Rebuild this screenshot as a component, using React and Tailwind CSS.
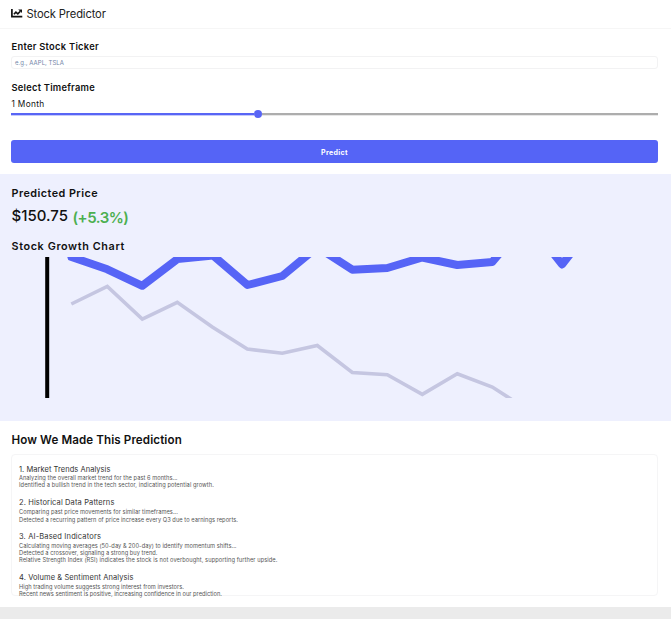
const steps = [
  {
    title: "1. Market Trends Analysis",
    titleClass: "tracking-[0.046px]",
    className: "",
    lines: [
      ["Analyzing the overall market trend for the past 6 months...", "h-[7px] leading-[7px] tracking-[0.045px]"],
      ["Identified a bullish trend in the tech sector, indicating potential growth.", "h-[7px] leading-[7px] tracking-[0.083px]"],
    ],
  },
  {
    title: "2. Historical Data Patterns",
    titleClass: "tracking-[0.125px]",
    className: "mt-[9px]",
    lines: [
      ["Comparing past price movements for similar timeframes...", "h-2 leading-[9px] tracking-[0.056px]"],
      ["Detected a recurring pattern of price increase every Q3 due to earnings reports.", "h-2 leading-[9px] tracking-[0.046px]"],
    ],
  },
  {
    title: "3. AI-Based Indicators",
    titleClass: "tracking-[0.154px] mb-px",
    className: "mt-2",
    lines: [
      ["Calculating moving averages (50-day & 200-day) to identify momentum shifts...", "h-[7px] leading-[7px] tracking-[0.046px]"],
      ["Detected a crossover, signaling a strong buy trend.", "h-[7px] leading-[7px] tracking-[0.034px]"],
      ["Relative Strength Index (RSI) indicates the stock is not overbought, supporting further upside.", "h-[7px] leading-[7px] tracking-[0.08px]"],
    ],
  },
  {
    title: "4. Volume & Sentiment Analysis",
    titleClass: "tracking-[0.089px] mb-px",
    className: "mt-[9px]",
    lines: [
      ["High trading volume suggests strong interest from investors.", "h-[7px] leading-[8px] tracking-[0.043px]"],
      ["Recent news sentiment is positive, increasing confidence in our prediction.", "h-[7px] leading-[8px] tracking-[0.027px]"],
    ],
  },
];

function ChartIcon() {
  return (
    <svg className="h-[9px] w-[11.5px]" viewBox="0 0 11.5 9" fill="none" stroke="#111" strokeWidth="1.7">
      <path d="M0.9 0V7.6H11.3" />
      <path d="M2.9 5.3L4.9 3.2L6.8 4.9L9.4 2.2" strokeWidth="1.6" />
      <path d="M7.2 0.4H11V4.1Z" fill="#111" stroke="none" />
    </svg>
  );
}

function Header() {
  return (
    <header className="flex h-[29px] items-center gap-1 border-b border-[#f6f6f6] pb-[2px] pl-[11px]">
      <ChartIcon />
      <h1 className="h-[26px] text-[11.2px] leading-[28px] tracking-[-0.13px] text-[#222]">Stock Predictor</h1>
    </header>
  );
}

function PredictForm() {
  return (
    <section className="flex flex-col pt-[11px] pr-[13px] pb-[11px] pl-[11px]">
      <label className="h-3 pl-[0.5px] text-[9.3px] leading-[14px] font-semibold tracking-[0.29px]">Enter Stock Ticker</label>
      <div className="mt-1 flex h-[13px] items-center rounded-[3px] border border-[#f2f2f3] pl-[3px]">
        <span className="text-[6px] leading-[11px] tracking-[0.042px] text-[#7386a8]">e.g., AAPL, TSLA</span>
      </div>
      <label className="mt-3 h-3 pl-[0.5px] text-[9.3px] leading-[14px] font-semibold tracking-[0.25px]">Select Timeframe</label>
      <span className="mt-[5px] h-3 pl-[0.5px] text-[8.3px] leading-[12px] tracking-[0.32px]">1 Month</span>
      <div className="flex h-2 items-center">
        <div className="h-[2px] w-[243px] bg-[#5865f5] shadow-[0_0.5px_0_0_#8c96f8]" />
        <div className="size-2 rounded-full bg-[#5865f5]" />
        <div className="h-[2px] flex-1 bg-[#adadad] shadow-[0_0.5px_0_0_#cfcfcf]" />
      </div>
      <button className="mt-[22px] h-[23px] rounded-[3px] bg-[#5564f6] text-[7px] leading-[25px] font-bold tracking-[0.37px] text-white">
        Predict
      </button>
    </section>
  );
}

function GrowthChart() {
  return (
    <svg className="mt-1 h-[141px] w-full" viewBox="0 257 671 141" fill="none">
      <path d="M47.2 257V398" stroke="#000" strokeWidth="4" />
      <polyline
        points="71.3,304 107.3,286.5 142.3,319 177.3,302.3 212.3,327 247.3,349 282.3,353.3 317.3,345.5 352.3,372.5 387.3,374.7 422.3,394.3 457.3,373.7 492.3,387 527,409.5"
        stroke="#c5c6e1"
        strokeWidth="3.6"
      />
      <polyline
        points="71.5,257 107.3,269.3 142.3,285.8 177.5,259 213,255.5 247.5,285 282.3,276 317.3,247 352.3,269.7 387.3,268 422.3,257.5 457.3,265 492.3,262 527.3,220 562,264.4 597,220"
        stroke="#5664f6"
        strokeWidth="8"
        strokeLinejoin="round"
        strokeLinecap="round"
      />
    </svg>
  );
}

function Results() {
  return (
    <section className="h-[247px] bg-[#eef0fe] pt-3">
      <h2 className="h-[14px] pl-[11.5px] text-[10.8px] leading-[16px] font-semibold tracking-[0.46px]">Predicted Price</h2>
      <div className="mt-[5px] flex h-5 items-start pl-[11.5px] leading-[22px]">
        <span className="w-[61px] text-[15px] font-medium">$150.75</span>
        <span className="pt-[2px] text-[15px] font-semibold tracking-[-0.5px] text-[#4caf50]">(+5.3%)</span>
      </div>
      <h2 className="mt-[14px] h-[14px] pl-[11.5px] text-[10.8px] leading-[16px] font-semibold tracking-[0.62px]">Stock Growth Chart</h2>
      <GrowthChart />
    </section>
  );
}

function Explanation() {
  return (
    <section className="h-[186px] bg-white pt-[10px] pr-[13px] pl-[11px]">
      <h2 className="h-4 pl-[0.5px] text-[11.6px] leading-[18px] font-semibold tracking-[0.1px]">How We Made This Prediction</h2>
      <div className="mt-[7px] h-[142px] rounded-[4px] border border-[#f5f5f6] pt-[9px] pl-[7px] whitespace-nowrap">
        {steps.map((step) => (
          <div key={step.title} className={step.className}>
            <h3 className={`h-[10px] text-[7.5px] leading-[12px] text-[#333] ${step.titleClass}`}>{step.title}</h3>
            {step.lines.map(([text, cls]) => (
              <p key={text} className={`text-[5.7px] text-[#555] ${cls}`}>{text}</p>
            ))}
          </div>
        ))}
      </div>
    </section>
  );
}

export default function App() {
  return (
    <div className="min-h-screen bg-[#ebebeb] font-[Inter,sans-serif] text-[#111]">
      <div className="bg-white">
        <Header />
        <PredictForm />
      </div>
      <Results />
      <Explanation />
    </div>
  );
}
